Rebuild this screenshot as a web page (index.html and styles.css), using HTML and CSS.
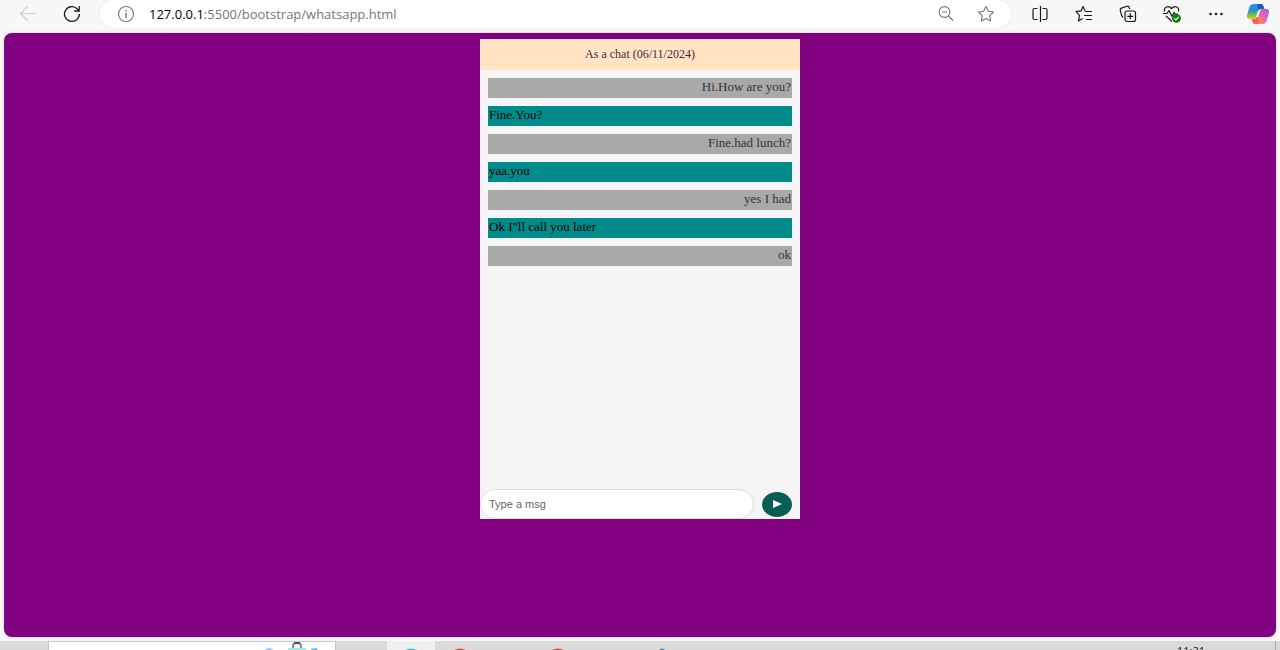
FILE: index.html
```html
<!DOCTYPE html>
<html lang="en">
<head>
<meta charset="utf-8">
<title>Chat</title>
<link rel="stylesheet" href="styles.css">
</head>
<body>
<header class="toolbar">
  <nav class="nav">
    <button class="tool" type="button" aria-label="Back" disabled>
      <svg width="18" height="18" viewBox="0 0 18 18" fill="none" stroke="#cfcfcf" stroke-width="1.2"><path d="M17 8.500H1.500M8.500 1.500 1.500 8.500l7 7"/></svg>
    </button>
    <button class="tool" type="button" aria-label="Refresh">
      <svg width="18" height="18" viewBox="0 0 18 18" fill="none" stroke="#1a1a1a" stroke-width="1.3"><path d="M16.300 9A7.400 7.400 0 1 1 14.500 4.200L16 6M16.200 1v5h-5"/></svg>
    </button>
  </nav>
  <div class="address">
    <svg width="18" height="18" viewBox="0 0 18 18" fill="none" stroke="#767676" stroke-width="1.1"><circle cx="9" cy="9" r="7.500"/><path stroke-width="1.500" d="M9 8v5M9 5v1.500"/></svg>
    <span class="url"><span class="host">127.0.0.1</span>:5500/bootstrap/whatsapp.html</span>
    <button class="tool" type="button" aria-label="Zoom out">
      <svg width="18" height="18" viewBox="0 0 18 18" fill="none" stroke="#767676" stroke-width="1.100"><circle cx="7.500" cy="7" r="5.400"/><path d="M5 7h5M11.500 11l4.500 4.500"/></svg>
    </button>
    <button class="tool" type="button" aria-label="Add to favourites">
      <svg width="18" height="18" viewBox="0 0 18 18" fill="none" stroke="#767676" stroke-width="1.100" stroke-linejoin="round"><path d="M9 1.500l2.300 4.800 5.200.7-3.800 3.700.9 5.300L9 13.500 4.400 16l.9-5.300L1.500 7l5.200-.7z"/></svg>
    </button>
  </div>
  <div class="actions">
    <button class="tool" type="button" aria-label="Split screen">
      <svg width="18" height="18" viewBox="0 0 18 18" fill="none" stroke="#1a1a1a" stroke-width="1.200"><path d="M6.500 3.500H3.500a1.500 1.500 0 0 0-1.500 1.500v8a1.500 1.500 0 0 0 1.500 1.500h3M11.500 3.500h3A1.500 1.500 0 0 1 16 5v8a1.500 1.500 0 0 1-1.500 1.500h-3M9.500 1v16"/></svg>
    </button>
    <button class="tool" type="button" aria-label="Favourites">
      <svg width="18" height="18" viewBox="0 0 18 18" fill="none" stroke="#1a1a1a" stroke-width="1.200" stroke-linejoin="round"><path d="M7.500 13.500 3.500 16l1-5.600L1 6.700l5-.8 2-4.400 2 4.500M10 6.500h7M9 10.500h8M11 14.500h6"/></svg>
    </button>
    <button class="tool" type="button" aria-label="Collections">
      <svg width="18" height="18" viewBox="0 0 18 18" fill="none" stroke="#1a1a1a" stroke-width="1.200" stroke-linejoin="round"><rect x="6" y="6" width="10.500" height="10.500" rx="2"/><path d="M11.300 8.300v6M8.300 11.300h6M4 12.500Q2.500 11 1.300 5.300a1.800 1.800 0 0 1 1.200-2.200L8 1.300a1.800 1.800 0 0 1 2.200 1.200l.6 1.500"/></svg>
    </button>
    <button class="tool" type="button" aria-label="Browser essentials">
      <svg width="20" height="18" viewBox="0 0 20 18" fill="none" stroke="#1a1a1a" stroke-width="1.200" stroke-linejoin="round"><path d="M2.500 6.500C1.500 2 6.500 0 9.500 3.500 12.500 0 17.500 2 16.500 6.500M1 8.500h4l2-3 3 6 2-4 1 1.500h3M4 11l6 5.500"/><circle cx="14.500" cy="13.300" r="4.400" fill="#0f7b10" stroke="none"/><path d="M12.300 13.300l1.600 1.600 2.800-2.900" stroke="#fff"/></svg>
    </button>
    <button class="tool" type="button" aria-label="Settings and more">
      <svg width="18" height="18" viewBox="0 0 18 18" fill="#1a1a1a"><circle cx="3.500" cy="9" r="1.300"/><circle cx="9" cy="9" r="1.300"/><circle cx="14.500" cy="9" r="1.300"/></svg>
    </button>
    <button class="tool copilot" type="button" aria-label="Copilot">
      <svg width="24" height="22" viewBox="0 0 24 22">
        <defs>
          <linearGradient id="cool" x1="0" y1="0" x2="0" y2="1"><stop offset="0" stop-color="#1b9be8"/><stop offset=".4" stop-color="#218fd8"/><stop offset=".7" stop-color="#6fba5a"/><stop offset="1" stop-color="#f2c714"/></linearGradient>
          <linearGradient id="warm" x1="1" y1="0" x2="0" y2="1"><stop offset="0" stop-color="#a25cf0"/><stop offset=".5" stop-color="#ef6a9b"/><stop offset="1" stop-color="#fb9b48"/></linearGradient>
        </defs>
        <path fill="url(#cool)" d="M8 1h8l-3.500 5-2.500 8c-.5 1.500-1 2-2.500 2H4c-3 0-3.500-2-2.800-4.500L3.500 4C4.200 2 5.500 1 8 1z"/>
        <path fill="#1a5cc4" d="M11 1h4c2 0 2.300 1.500 2.800 3l.7 2H15c-1.500 0-2 .5-2.500 2z"/>
        <path fill="url(#warm)" d="M16 21H8.500l3-5 2.500-8c.5-1.500 1-2 2.500-2H20c3 0 3.500 2 2.800 4.500L20.500 18c-.7 2-2 3-4.500 3z"/>
        <path fill="#f2684c" d="M13 21H9c-2 0-2.300-1.500-2.800-3l-.7-2H8c1.500 0 2-.5 2.500-2l1.500 0z"/>
      </svg>
    </button>
  </div>
</header>
<main class="page">
  <section class="chat">
    <h1 class="chat-title">As a chat (06/11/2024)</h1>
    <div class="messages">
      <p class="message sent">Hi.How are you?</p>
      <p class="message received">Fine.You?</p>
      <p class="message sent">Fine.had lunch?</p>
      <p class="message received">yaa.you</p>
      <p class="message sent">yes I had</p>
      <p class="message received">Ok I"ll call you later</p>
      <p class="message sent">ok</p>
    </div>
    <form class="composer">
      <input class="field" type="text" placeholder="Type a msg" aria-label="Type a msg">
      <button class="send" type="button" aria-label="Send"><svg width="9" height="8" viewBox="0 0 9 8" fill="#fff"><path d="M0 0l9 4-9 4z"/></svg></button>
    </form>
  </section>
</main>
<footer class="taskbar">
  <div class="search">
    <svg width="60" height="9" viewBox="0 0 60 9"><path fill="#8cc4fb" d="M4 8.500c0-3 8-3 8 0z"/><path fill="none" stroke="#666b80" stroke-width="1.500" d="M32 7V3.500q0-2 2-2h4q2 0 2 2V7"/><path fill="#494f75" d="M33 0h6v2h-6z"/><path fill="#9fece6" d="M27 6h18v3H27z"/><path fill="#51b6d6" d="M49 8.500l2-2h3l1-1 2 3z"/></svg>
  </div>
  <div class="apps">
    <span class="app active"><svg width="12" height="2" viewBox="0 0 12 2"><path fill="#35c0cf" d="M0 2Q6-1 12 2z"/></svg></span>
    <span class="app"><svg width="12" height="2" viewBox="0 0 12 2"><path fill="#e04a35" d="M0 2Q6-1 12 2z"/></svg></span>
    <span class="app"></span>
    <span class="app"><svg width="12" height="2" viewBox="0 0 12 2"><path fill="#e04a35" d="M0 2Q6-1 12 2z"/></svg></span>
    <span class="app"></span>
    <span class="app"><svg width="18" height="2" viewBox="0 0 18 2"><path fill="#3388c8" d="M12 2Q15-1 18 2z"/></svg></span>
  </div>
  <time class="clock">11:21</time>
  <span class="show-desktop"></span>
</footer>
</body>
</html>
```
FILE: styles.css
```css
* {
  box-sizing: border-box;
}

body {
  margin: 0;
  height: 100vh;
  display: flex;
  flex-direction: column;
  overflow: hidden;
  background: #f7f7f7;
  font-family: "Liberation Serif", "Times New Roman", serif;
}

button {
  margin: 0;
  padding: 0;
  border: 0;
  background: none;
}

svg {
  display: block;
  flex: none;
}

.toolbar {
  flex: none;
  display: flex;
  align-items: flex-start;
  height: 33px;
  padding: 0 13px 0 19px;
}

.nav,
.actions {
  display: flex;
  align-items: center;
  height: 28px;
}

.nav {
  gap: 26px;
  margin-right: 19px;
}

.actions {
  gap: 26px;
  margin-left: 20px;
}

.actions .tool {
  display: flex;
  justify-content: center;
  width: 18px;
}

.actions .copilot {
  margin-left: -2px;
}

.address {
  flex: 1;
  display: flex;
  align-items: center;
  height: 28px;
  padding: 0 16px 0 17px;
  border-radius: 14px;
  background: #fff;
  box-shadow: 0 0 3px #e4e4e4;
}

.address .tool + .tool {
  margin-left: 22px;
}

.url {
  flex: 1;
  margin-left: 14px;
  color: #767676;
  font: 13px/20px "Open Sans", "Noto Sans", sans-serif;
}

.host {
  color: #000;
}

.page {
  flex: 1;
  display: flex;
  justify-content: center;
  align-items: flex-start;
  margin: 0 4px 4px;
  padding-top: 6px;
  border-radius: 8px;
  background: #800080;
  box-shadow: 0 0 3px #c8c8c8;
}

.chat {
  display: flex;
  flex-direction: column;
  width: 320px;
  min-height: 480px;
  background: #f5f5f5;
}

.chat-title {
  margin: 0;
  padding: 8px;
  background: #ffe4c4;
  color: #4b1f3f;
  font-size: 12px;
  font-weight: 400;
  line-height: 15px;
  text-align: center;
}

.messages {
  flex: 1;
  display: flex;
  flex-direction: column;
  gap: 8px;
  padding: 8px;
}

.message {
  margin: 0;
  padding: 1px 1px 4px;
  font-size: 13px;
  line-height: 15px;
}

.sent {
  background: #a9a9a9;
  color: #333;
  text-align: right;
}

.received {
  background: #008b8b;
  color: #000;
}

.composer {
  display: flex;
  align-items: center;
  gap: 8px;
  padding-right: 8px;
}

.field {
  flex: 1;
  min-width: 0;
  height: 30px;
  padding: 0 8px;
  border: 1px solid #ddd;
  border-radius: 15px;
  background: #fff;
  font: 11px "Liberation Sans", Arial, sans-serif;
}

.field::placeholder {
  color: #666;
}

.send {
  display: flex;
  align-items: center;
  justify-content: center;
  width: 30px;
  height: 25px;
  border-radius: 50%;
  background: #075e54;
}

.taskbar {
  flex: none;
  display: flex;
  height: 9px;
  padding-left: 48px;
  overflow: hidden;
  background: #dadada;
}

.search {
  display: flex;
  justify-content: flex-end;
  width: 288px;
  padding-right: 14px;
  border: 1px solid #c4c4c4;
  border-bottom: 0;
  background: #fff;
}

.apps {
  flex: 1;
  display: flex;
  margin-left: 51px;
}

.app {
  display: flex;
  align-items: flex-end;
  justify-content: center;
  width: 49px;
}

.app.active {
  width: 48px;
  background: #f0f0f0;
}

.clock {
  margin: 4px 70px 0 0;
  color: #111;
  font: 11px/12px "Open Sans", "Noto Sans", sans-serif;
}

.show-desktop {
  width: 5px;
  border-left: 1px solid #a8a8a8;
}
```
